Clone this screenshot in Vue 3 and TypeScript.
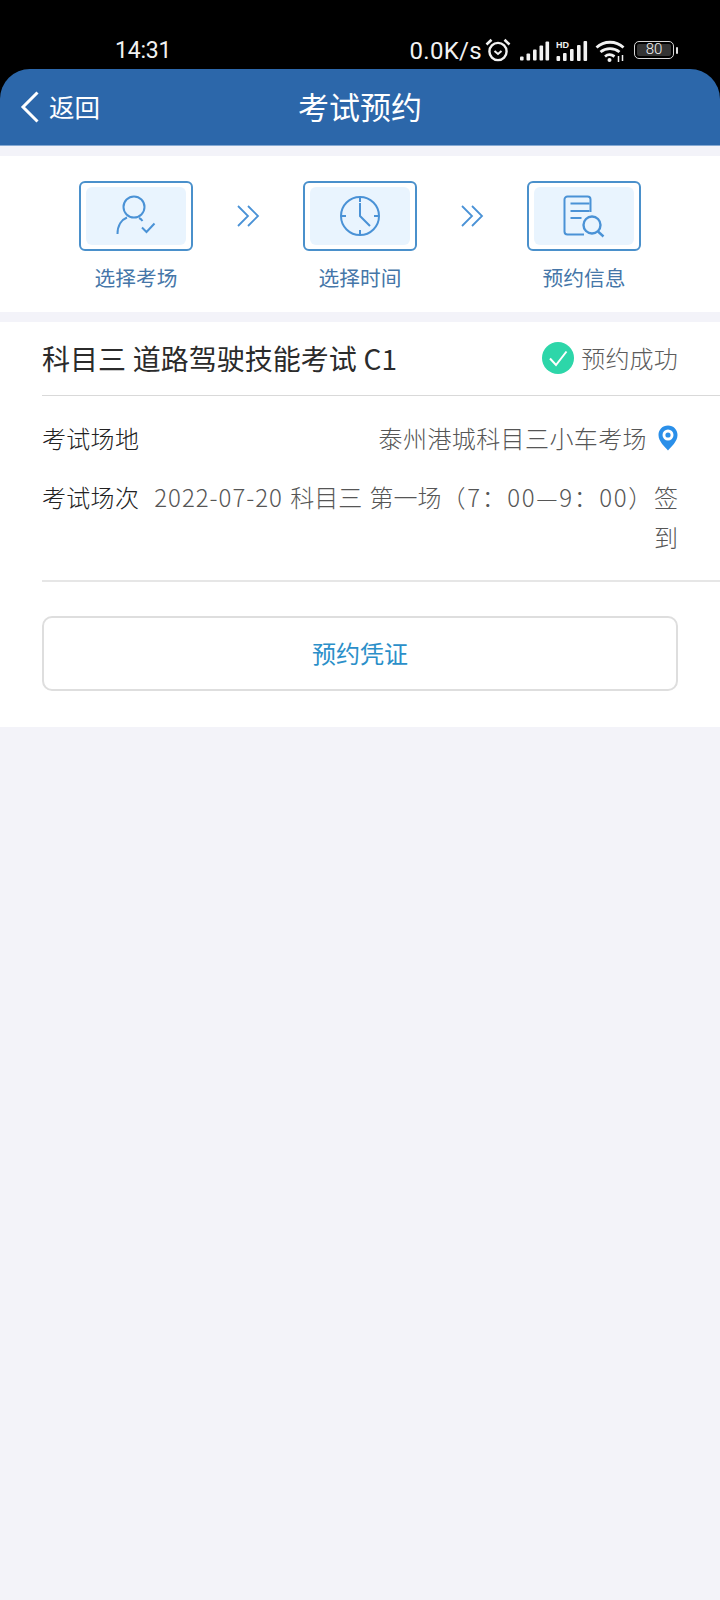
<script setup lang="ts">
const steps = [
  { key: 'site', label: '选择考场' },
  { key: 'time', label: '选择时间' },
  { key: 'info', label: '预约信息' },
]
const signalBars = [
  { x: 0, h: 4 },
  { x: 6.5, h: 7 },
  { x: 13, h: 11 },
  { x: 19.5, h: 15 },
  { x: 25.5, h: 19 },
]
</script>

<template>
  <div class="page">
    <div class="status-bar">
      <span class="time">14:31</span>
      <div class="status-right">
        <span class="speed">0.0K/s</span>
        <svg class="alarm" width="26" height="24" viewBox="0 0 26 24" fill="none" stroke="#f2f2f2">
          <circle cx="13" cy="13.5" r="8.6" stroke-width="2.4" />
          <path d="M9.5 13l3.5 3 3.5-3" stroke-width="2" />
          <path d="M1.5 6.5L6.5 1.8M24.5 6.5L19.5 1.8" stroke-width="2.6" />
        </svg>
        <svg class="signal" width="30" height="20" viewBox="0 0 30 20" fill="#f2f2f2">
          <rect v-for="b in signalBars" :key="b.x" :x="b.x" :y="19.5 - b.h" width="3.6" :height="b.h" rx="1" />
        </svg>
        <svg class="signal-hd" width="32" height="22" viewBox="0 0 32 22" fill="#f2f2f2">
          <rect x="0.5" y="16" width="3.6" height="5" rx="1" />
          <rect x="7" y="13" width="3.6" height="8" rx="1" />
          <rect x="14" y="9" width="3.6" height="12" rx="1" />
          <rect x="21" y="5" width="3.6" height="16" rx="1" />
          <rect x="27.5" y="1" width="3.6" height="20" rx="1" />
          <text x="0" y="7.5" class="hd">HD</text>
        </svg>
        <svg class="wifi" width="31" height="23" viewBox="0 0 31 23" fill="none" stroke="#f2f2f2" stroke-width="2.8">
          <path d="M1.5 7.5C9 0.5 21 0.5 28.5 7.5" />
          <path d="M5.5 12C11 7.5 19 7.5 24.5 12" />
          <path d="M10 16.5c3-2.5 6-2.5 9.5 0" />
          <circle cx="14.5" cy="20" r="2" fill="#f2f2f2" stroke="none" />
          <path d="M23.5 16v6M27.5 15v6" stroke-width="1.5" />
        </svg>
        <div class="battery">
          <div class="battery-body"><span>80</span></div>
          <i class="battery-nub"></i>
        </div>
      </div>
    </div>

    <header class="nav">
      <div class="back">
        <svg width="20" height="32" viewBox="0 0 20 32" fill="none" stroke="#fff" stroke-width="3">
          <path d="M17.5 1.5L3 16l14.500 14.500" />
        </svg>
        <span>返回</span>
      </div>
      <h1>考试预约</h1>
    </header>

    <section class="steps">
      <template v-for="(s, i) in steps" :key="s.key">
        <div class="step">
          <div class="step-box">
            <div class="step-inner">
              <svg v-if="s.key === 'site'" width="48" height="48" viewBox="0 0 48 48" fill="none" stroke="#4a92d6" stroke-width="2">
                <circle cx="22" cy="15" r="10.5" />
                <path d="M5.5 42C5.5 33 10 27.5 15 25.5M27 26c1.500 0.600 2.500 1.500 3.500 3" />
                <path d="M30 35.500l4.500 4.500 8-8.500" />
              </svg>
              <svg v-else-if="s.key === 'time'" width="48" height="48" viewBox="0 0 48 48" fill="none" stroke="#4a92d6" stroke-width="2">
                <circle cx="24" cy="24" r="19" />
                <path d="M24 5v5M24 38v5M5 24h5M38 24h5" />
                <path d="M24 11v13l10 10" />
              </svg>
              <svg v-else width="48" height="48" viewBox="0 0 48 48" fill="none" stroke="#4a92d6" stroke-width="2">
                <path d="M24 42.5H7.5a3 3 0 0 1-3-3V7.5a3 3 0 0 1 3-3h20a3 3 0 0 1 3 3V20" />
                <path d="M10.5 11.5h19M10.5 19h19M10.5 26h11" />
                <circle cx="32" cy="33" r="8.5" stroke-width="2.4" />
                <path d="M38 39.5l5.500 5" stroke-width="2.4" />
              </svg>
            </div>
          </div>
          <span class="step-label">{{ s.label }}</span>
        </div>
        <svg v-if="i < steps.length - 1" class="step-arrow" width="24" height="24" viewBox="0 0 24 24" fill="none" stroke="#4a92d6" stroke-width="1.8">
          <path d="M2 2l10 10L2 22M12 2l10 10-10 10" />
        </svg>
      </template>
    </section>

    <section class="card">
      <div class="title-row">
        <span class="subject">科目三 道路驾驶技能考试 C1</span>
        <div class="state">
          <svg width="32" height="32" viewBox="0 0 32 32">
            <circle cx="16" cy="16" r="16" fill="#2dd6a9" />
            <path d="M8 16.5l6 6.5L24.5 9.500" fill="none" stroke="#fff" stroke-width="2" />
          </svg>
          <span>预约成功</span>
        </div>
      </div>

      <div class="info">
        <div class="info-row">
          <span class="info-key">考试场地</span>
          <div class="info-value place">
            <span>泰州港城科目三小车考场</span>
            <svg width="20" height="26" viewBox="0 0 20 26">
              <path d="M10 0.5C4.5 0.5 0.5 4.7 0.5 10c0 6.5 6.5 12 9.5 15.5C13 22 19.5 16.5 19.5 10 19.5 4.7 15.5 0.5 10 0.5z" fill="#2a8fe9" />
              <circle cx="10" cy="10" r="5.5" fill="#fff" />
              <circle cx="10" cy="10" r="2.6" fill="#2a8fe9" />
            </svg>
          </div>
        </div>
        <div class="info-row">
          <span class="info-key">考试场次</span>
          <div class="info-value session"><span class="num">2022-07-20</span> 科目三 第一场<span class="num wide">（7：00—9：00）</span>签到</div>
        </div>
      </div>

      <div class="action">
        <button class="voucher" type="button">预约凭证</button>
      </div>
    </section>
  </div>
</template>

<style>
html,
body {
  margin: 0;
  background: #f3f3f9;
}
</style>

<style scoped>
.page {
  min-height: 1600px;
  background: #f3f3f9;
  font-family: "Noto Sans CJK SC", "Noto Sans", sans-serif;
  font-weight: 300;
  text-spacing-trim: space-all;
}

.status-bar {
  height: 100px;
  margin-bottom: -31px;
  box-sizing: border-box;
  padding: 37px 42px 0 115px;
  display: flex;
  justify-content: space-between;
  color: #f2f2f2;
  background: #000;
}

.time,
.speed {
  font-family: Roboto, "Liberation Sans", sans-serif;
  line-height: 28px;
  font-weight: 400;
}

.time {
  font-size: 23px;
  letter-spacing: -0.2px;
}

.speed {
  font-size: 24px;
  letter-spacing: 0.3px;
}

.status-right {
  display: flex;
  align-items: center;
  height: 28px;
}

.alarm {
  margin-left: 3px;
  margin-top: -2px;
}

.signal {
  margin-left: 9px;
}

.signal-hd {
  margin-left: 6px;
}

.hd {
  font-family: "Liberation Sans", sans-serif;
  font-size: 9px;
  font-weight: 700;
  fill: #f2f2f2;
}

.wifi {
  margin-left: 7px;
}

.battery {
  margin-left: 8px;
  margin-top: -2px;
  display: flex;
  align-items: center;
}

.battery-body {
  width: 40px;
  height: 18px;
  box-sizing: border-box;
  border: 1.5px solid #d8d8d8;
  border-radius: 5px;
  padding: 2px;
  display: flex;
}

.battery-body span {
  flex: 1;
  background: #333;
  border-radius: 2px;
  color: #f2f2f2;
  font-family: Roboto, sans-serif;
  font-size: 15px;
  line-height: 11px;
  text-align: center;
}

.battery-nub {
  width: 2px;
  height: 7px;
  margin-left: 2px;
  background: #e0e0e0;
  border-radius: 1px;
}

.nav {
  height: 77px;
  position: relative;
  box-sizing: border-box;
  background: #2c67aa;
  border-radius: 30px 30px 0 0;
  border-bottom: 1px solid #86a9d2;
  display: flex;
  align-items: center;
  justify-content: center;
  padding-bottom: 3px;
  color: #fff;
}

.nav h1 {
  margin: 0;
  font-size: 31px;
  line-height: 40px;
  font-weight: 400;
}

.back {
  position: absolute;
  left: 20px;
  top: 22px;
  display: flex;
  align-items: center;
  gap: 9px;
  font-size: 25.5px;
  font-weight: 400;
  line-height: 32px;
}

.back span {
  margin-top: -2px;
}

.steps {
  margin-top: 10px;
  height: 156px;
  box-sizing: border-box;
  padding: 25px 79px 0;
  background: #fff;
  display: flex;
  justify-content: space-between;
  align-items: flex-start;
}

.step {
  width: 114px;
  display: flex;
  flex-direction: column;
  align-items: center;
}

.step-box {
  width: 114px;
  height: 70px;
  box-sizing: border-box;
  border: 2px solid #4a90cb;
  border-radius: 6px;
  padding: 4px 5px;
}

.step-inner {
  height: 100%;
  background: #e9f4fe;
  border-radius: 6px;
  display: flex;
  align-items: center;
  justify-content: center;
}

.step-label {
  margin-top: 12px;
  font-size: 20.7px;
  font-weight: 400;
  line-height: 28px;
  color: #4576a8;
}

.step-arrow {
  margin-top: 23px;
}

.card {
  margin-top: 10px;
  height: 405px;
  background: #fff;
  padding-left: 42px;
}

.title-row {
  height: 74px;
  box-sizing: border-box;
  padding: 0 42px 2px 0;
  border-bottom: 1px solid #d9d9d9;
  display: flex;
  align-items: center;
  justify-content: space-between;
}

.subject {
  font-size: 28px;
  line-height: 36px;
  word-spacing: 0.5px;
  font-weight: 400;
  color: #2b2b2b;
}

.state {
  display: flex;
  align-items: center;
  gap: 7px;
  font-size: 24px;
  letter-spacing: 0.2px;
  line-height: 32px;
  color: #5c5c5c;
}

.info {
  padding: 22px 42px 20px 0;
  border-bottom: 2px solid #e6e6e6;
  height: 186px;
  box-sizing: border-box;
}

.info-row {
  display: flex;
  justify-content: space-between;
  font-size: 24px;
  line-height: 40px;
  margin-bottom: 19px;
}

.info-key {
  flex: none;
  letter-spacing: 0.3px;
  color: #222;
}

.info-value {
  flex: 1;
  margin-left: 12px;
  color: #565656;
  text-align: right;
}

.session {
  word-spacing: 2px;
}

.num {
  letter-spacing: 1px;
}

.wide {
  letter-spacing: 1.65px;
}

.place {
  display: flex;
  justify-content: flex-end;
  align-items: center;
  gap: 11px;
  letter-spacing: 0.4px;
}

.action {
  padding: 34px 42px 0 0;
}

.voucher {
  display: block;
  width: 100%;
  height: 75px;
  padding-bottom: 3px;
  background: #fff;
  border: 2px solid #dedede;
  border-radius: 10px;
  font-family: inherit;
  font-size: 24px;
  font-weight: 400;
  color: #2b8fc9;
}
</style>
